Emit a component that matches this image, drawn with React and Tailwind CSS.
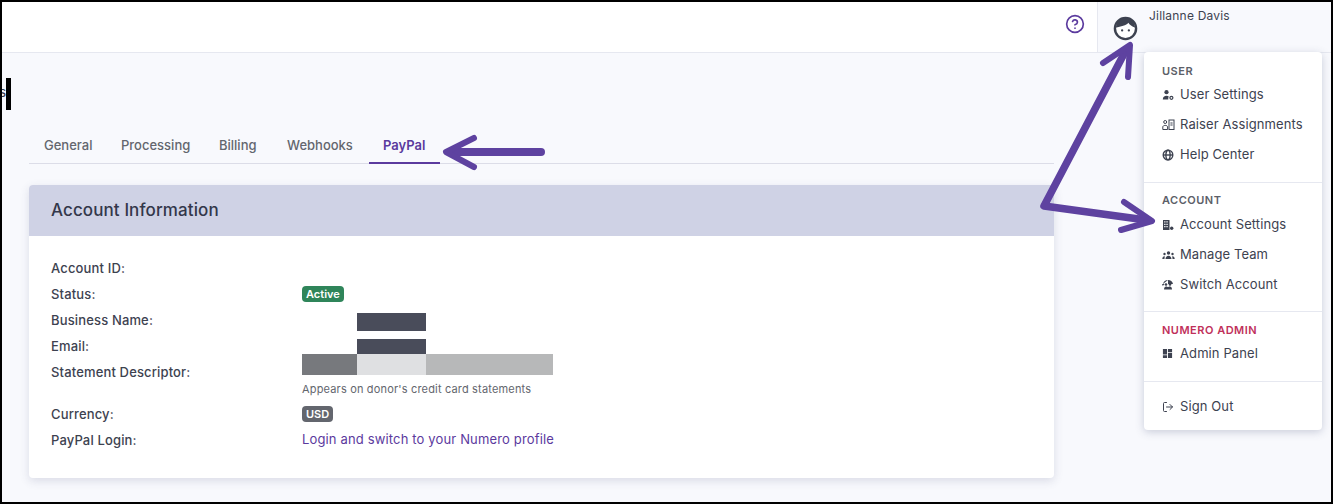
import React from 'react';
import { CircleHelp, LogOut } from 'lucide-react';

const font = { fontFamily: 'Inter, sans-serif' };

const UserCog = () => (
  <svg viewBox="0 0 12 12" className="w-[12px] h-[12px] fill-[#3d4250]">
    <circle cx="4.500" cy="3.200" r="2.100" />
    <path d="M.8 10.500c0-2.400 1.600-3.700 3.700-3.700 1 0 1.800.3 2.300.8-.5.7-.7 1.700-.5 2.900z" />
    <circle cx="9.400" cy="8.800" r="1.500" fill="none" stroke="#3d4250" strokeWidth="1.200" />
  </svg>
);

const Raiser = () => (
  <svg viewBox="0 0 13 12" className="w-[13px] h-[12px] fill-none stroke-[#3d4250]" strokeWidth="1">
    <circle cx="3.200" cy="3" r="1.500" />
    <path d="M.8 10.500V8c0-1 1-1.600 2.400-1.600S5.600 7 5.600 8v2.500z" />
    <rect x="7" y="1" width="5" height="9.500" />
    <path d="M8.400 4h2.200M8.400 6h2.200" />
  </svg>
);

const Globe = () => (
  <svg viewBox="0 0 12 12" className="w-[12px] h-[12px] fill-none stroke-[#3d4250]" strokeWidth="1.400">
    <circle cx="6" cy="6" r="4.800" />
    <ellipse cx="6" cy="6" rx="2.100" ry="4.800" />
    <path d="M1.200 6h9.600" />
  </svg>
);

const Building = () => (
  <svg viewBox="0 0 12 12" className="w-[12px] h-[12px] fill-[#3d4250]">
    <path d="M1 1h6.500v10H1zm1.200 1.300v1.200h1.300V2.300zm2.200 0v1.200h1.300V2.300zM2.200 4.700v1.200h1.300V4.700zm2.200 0v1.200h1.300V4.700zM2.200 7.100v1.200h1.300V7.100zm2.200 0v1.200h1.300V7.100z" fillRule="evenodd" />
    <circle cx="9.700" cy="9.300" r="1.700" />
  </svg>
);

const Team = () => (
  <svg viewBox="0 0 13 12" className="w-[13px] h-[12px] fill-[#3d4250]">
    <circle cx="6.500" cy="4" r="1.700" />
    <circle cx="2.500" cy="5" r="1.200" />
    <circle cx="10.500" cy="5" r="1.200" />
    <path d="M3.500 10c0-2 1.300-3.300 3-3.300s3 1.300 3 3.300zM.3 10c0-1.500.8-2.700 2.200-2.700l.4.100c-.3.700-.4 1.600-.4 2.600zM12.700 10c0-1.500-.8-2.700-2.200-2.700l-.4.100c.3.700.4 1.600.4 2.600z" />
  </svg>
);

const Switch = () => (
  <svg viewBox="0 0 12 12" className="w-[12px] h-[12px] fill-[#3d4250]">
    <path d="M6 1C3.500 1 1.500 2.600 1 5h1.500L.8 7 0 5h.9M6 1c2.500 0 4.500 1.600 5 4H6z" />
    <circle cx="4" cy="5.500" r="1.300" />
    <circle cx="8" cy="5.500" r="1.300" />
    <path d="M2 10.500c0-1.800 1-3 2-3s1.500.6 2 .6.900-.6 2-.6 2 1.200 2 3z" />
  </svg>
);

const Grid = () => (
  <svg viewBox="0 0 12 12" className="w-[11px] h-[11px] fill-[#3d4250]">
    <path d="M1 1h4.500v6H1zM6.500 1H11v3.500H6.500zM6.500 5.500H11V11H6.500zM1 8h4.500v3H1z" />
  </svg>
);

const MenuItem = ({ icon, label, className }) => (
  <div className={`flex items-center h-[30px] ${className || ''}`}>
    <span className="w-[18px] flex items-center shrink-0">{icon}</span>
    <span className="text-[13px] tracking-[0.1px] whitespace-nowrap text-[#3d4250]">{label}</span>
  </div>
);

const SectionTitle = ({ children, red }) => (
  <div className={`text-[11px] font-semibold tracking-[0.5px] uppercase ${red ? 'text-[#c0305a]' : 'text-[#5c6068]'}`}>
    {children}
  </div>
);

const InfoRow = ({ label, children, className }) => (
  <div className={`flex items-center h-[26px] ${className || ''}`}>
    <div className="w-[251px] shrink-0 text-[13px] tracking-[0.15px] font-medium text-[#3d4250]">{label}</div>
    <div>{children}</div>
  </div>
);

const Badge = ({ children, color }) => (
  <span className={`flex items-center h-[16px] -mt-[2px] px-[4px] rounded-[4px] text-[11px] font-semibold text-white w-fit ${color}`}>
    {children}
  </span>
);

const tabs = [
  { name: 'General', width: 'w-[48px]' },
  { name: 'Processing', width: 'w-[69px]' },
  { name: 'Billing', width: 'w-[39px]' },
  { name: 'Webhooks', width: 'w-[67px]' },
];

export default function App() {
  return (
    <div style={font} className="relative w-[1333px] h-[504px] overflow-hidden border-2 border-black bg-[#f8f9fd]">
      <header className="flex justify-end h-[51px] bg-white border-b border-[#e6e8f0]">
        <div className="flex pt-[12px] pr-[12px]">
          <CircleHelp className="w-[20px] h-[20px] text-[#5b3a9e]" strokeWidth={2} />
        </div>
        <div className="flex w-[234px] bg-[#f8f9fd] border-l border-[#e6e8f0] pl-[15px]">
          <svg viewBox="0 0 26 26" className="w-[25px] h-[25px] mt-[14px] shrink-0">
            <circle cx="13" cy="13" r="11" fill="#fff" stroke="#3d4250" strokeWidth="2.500" />
            <path d="M3 12C4 5 8 2 13 2s9 3 10 10c-3-1-6-3-7-5-2 3-8 4-13 5z" fill="#3d4250" />
            <circle cx="9.500" cy="15" r="1.200" fill="#3d4250" />
            <circle cx="16.500" cy="15" r="1.200" fill="#3d4250" />
          </svg>
          <div className="ml-[11px] mt-[6px] text-[12px] leading-[16px] tracking-[0.2px] text-[#3d4250]">Jillanne Davis</div>
        </div>
      </header>

      {/* recorte preto que sobrou na captura */}
      <div className="absolute left-0 top-[80px] w-[4px] h-[20px] overflow-hidden flex justify-end text-[13px] leading-[20px] text-[#33374a]">s</div>
      <div className="absolute left-[4px] top-[76px] w-[5px] h-[32px] bg-black" />

      <main className="pl-[27px] w-[1052px]">
        <nav className="flex gap-[29px] h-[36px] mt-[75px] pl-[15px] border-b border-[#dcdde8]">
          {tabs.map(tab => (
            <div key={tab.name} className={`pt-[8px] text-[13px] font-medium whitespace-nowrap text-[#63666e] ${tab.width}`}>{tab.name}</div>
          ))}
          <div className="-ml-[14px] pl-[14px] w-[71px] h-[36px] pt-[8px] text-[13px] font-semibold text-[#5b3a9e] border-b-2 border-[#5b3a9e]">PayPal</div>
        </nav>

        <section className="mt-[21px] h-[293px] bg-white rounded-[4px] shadow-[0_3px_10px_rgba(60,70,110,0.16)] overflow-hidden">
          <div className="flex items-center h-[51px] pl-[22px] pt-[1px] bg-[#cfd2e5] text-[17px] tracking-[0.1px] font-medium text-[#33374a]">
            Account Information
          </div>
          <div className="relative pl-[22px] pt-[20px]">
            <InfoRow label="Account ID:" />
            <InfoRow label="Status:"><Badge color="bg-[#2f855a]">Active</Badge></InfoRow>
            <InfoRow label="Business Name:" />
            <InfoRow label="Email:" />
            <InfoRow label="Statement Descriptor:" />
            <div className="pl-[251px] h-[16px] -mt-[5px] flex items-center text-[11px] tracking-[0.17px] text-[#63666e]">Appears on donor's credit card statements</div>
            <InfoRow label="Currency:" className="mt-[5px]"><Badge color="bg-[#63666e]">USD</Badge></InfoRow>
            <InfoRow label="PayPal Login:"><span className="block -mt-[3px] text-[13px] tracking-[0.15px] text-[#5b3a9e]">Login and switch to your Numero profile</span></InfoRow>

            {/* tarjas por cima dos dados */}
            <div className="absolute left-[328px] top-[77px] w-[69px] h-[18px] bg-[#494c5a]" />
            <div className="absolute left-[328px] top-[103px] w-[69px] h-[15px] bg-[#494c5a]" />
            <div className="absolute left-[273px] top-[118px] flex h-[21px]">
              <div className="w-[55px] bg-[#77797d]" />
              <div className="w-[69px] bg-[#dfe0e2]" />
              <div className="w-[127px] bg-[#b7b8b9]" />
            </div>
          </div>
        </section>
      </main>

      {/* menu do usuário */}
      <div className="absolute left-[1142px] top-[50px] w-[178px] h-[378px] bg-white rounded-[4px] shadow-[0_2px_8px_rgba(60,70,110,0.25)]">
        <div className="px-[18px] pt-[11px] h-[131px] border-b border-[#e6e8f0]">
          <SectionTitle>User</SectionTitle>
          <MenuItem icon={<UserCog />} label="User Settings" />
          <MenuItem icon={<Raiser />} label="Raiser Assignments" />
          <MenuItem icon={<Globe />} label="Help Center" />
        </div>
        <div className="px-[18px] pt-[9px] h-[129px] border-b border-[#e6e8f0]">
          <SectionTitle>Account</SectionTitle>
          <MenuItem icon={<Building />} label="Account Settings" className="mt-[1px]" />
          <MenuItem icon={<Team />} label="Manage Team" />
          <MenuItem icon={<Switch />} label="Switch Account" />
        </div>
        <div className="px-[18px] pt-[10px] h-[70px] border-b border-[#e6e8f0]">
          <SectionTitle red>Numero Admin</SectionTitle>
          <MenuItem icon={<Grid />} label="Admin Panel" />
        </div>
        <div className="px-[18px] pt-[10px]">
          <MenuItem icon={<LogOut className="w-[12px] h-[12px] text-[#3d4250]" />} label="Sign Out" />
        </div>
      </div>

      {/* setas de anotação */}
      <svg className="absolute left-[-2px] top-[-2px] pointer-events-none" width="1333" height="504" viewBox="0 0 1333 504" fill="none" stroke="#5e42a0" strokeLinecap="round" strokeLinejoin="round">
        <path d="M541 152H450" strokeWidth="8" />
        <path d="M474 138L446 152L474 167" strokeWidth="6" />
        <path d="M1126 50L1044 206L1146 220" strokeWidth="7.500" />
        <path d="M1103 63L1130 45L1128 77" strokeWidth="6" />
        <path d="M1124 202L1152 221L1121 230" strokeWidth="6" />
      </svg>
    </div>
  );
}
